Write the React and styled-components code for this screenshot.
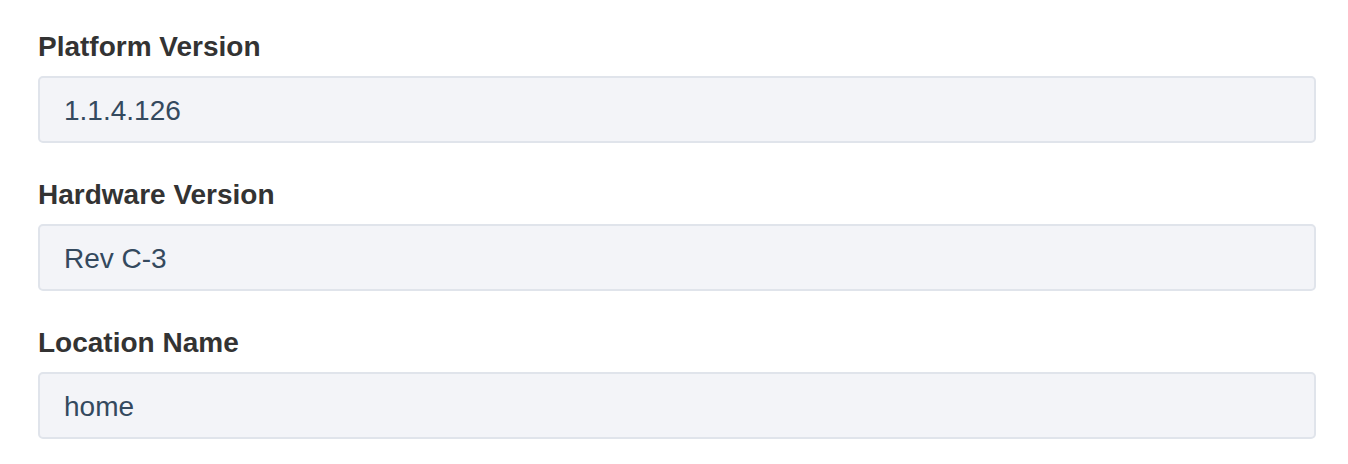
import React from 'react'
import styled, { createGlobalStyle } from "styled-components";

const GlobalStyle = createGlobalStyle`
body {
    margin: 0;
    background: #ffffff;
    font-family: "Liberation Sans", Arial, sans-serif;
}
`;

const Page = styled.div`
padding: 27px 32px 0 38px;
display: flex;
flex-direction: column;
gap: 32px;
`;

const Field = styled.div`
display: flex;
flex-direction: column;
gap: 9px;
`;

const Label = styled.label`
font-size: 28px;
line-height: 40px;
font-weight: bold;
color: #333333;
`;

const ReadonlyInput = styled.div`
box-sizing: border-box;
height: 67px;
display: flex;
align-items: center;
padding: 2px 24px 0;
background-color: #f3f4f8;
border: 2px solid #e0e4eb;
border-radius: 5px;
font-size: 28px;
color: #34495e;
`;

const fields = [
    { label: "Platform Version", value: "1.1.4.126" },
    { label: "Hardware Version", value: "Rev C-3" },
    { label: "Location Name", value: "home" },
];

function App() {
    return <>
        <GlobalStyle/>
        <Page>
            {fields.map(f => (
                <Field key={f.label}>
                    <Label>{f.label}</Label>
                    <ReadonlyInput>{f.value}</ReadonlyInput>
                </Field>
            ))}
        </Page>
    </>
}
export default App;
